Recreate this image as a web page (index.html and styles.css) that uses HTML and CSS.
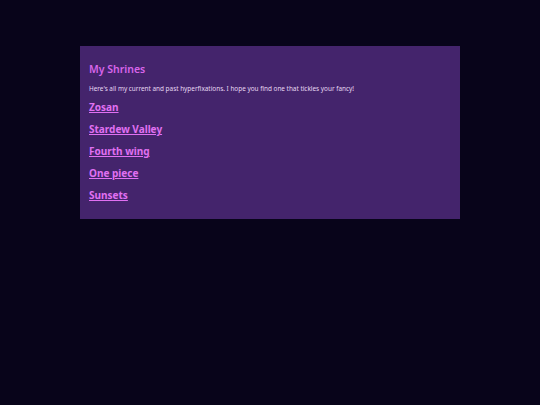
FILE: index.html
```html
<!DOCTYPE html>
<html lang="en">
<head>
    <meta charset="utf-8" />
    <title>My Shrines</title>
    <link rel="stylesheet" href="styles.css">
</head>
<body>
    <div id="main">
        <h1>My Shrines</h1>
        <p>Here's all my current and past hyperfixations. I hope you find one that tickles your fancy!</p>
        <ul class="shrineList">
            <li><a href="#">Zosan</a></li>
            <li><a href="#">Stardew Valley</a></li>
            <li><a href="#">Fourth wing</a></li>
            <li><a href="#">One piece</a></li>
            <li><a href="#">Sunsets</a></li>
        </ul>
    </div>
</body>
</html>
```

FILE: styles.css
```css
body {
    font-family: "Noto Sans", sans-serif;
    background-color: #08041a;
    margin: 0;
    padding: 0;
}
#main {
    width: 363px;
    margin: 46px auto 0;
    padding: 10px 8px 15px 9px;
    background-color: #44246c;
}
h1 {
    color: #d865ea;
    font-size: 10.5px;
    font-weight: 600;
    line-height: 15px;
    margin: 6px 0 7px;
}
p {
    color: #e6d8f2;
    font-size: 6.4px;
    line-height: 9px;
    margin: 0 0 1px;
}
.shrineList {
    list-style: none;
    margin: 0;
    padding: 0;
}
.shrineList li {
    height: 22px;
    line-height: 22px;
}
.shrineList a {
    color: #e070f2;
    font-size: 10px;
    font-weight: 700;
}
```
